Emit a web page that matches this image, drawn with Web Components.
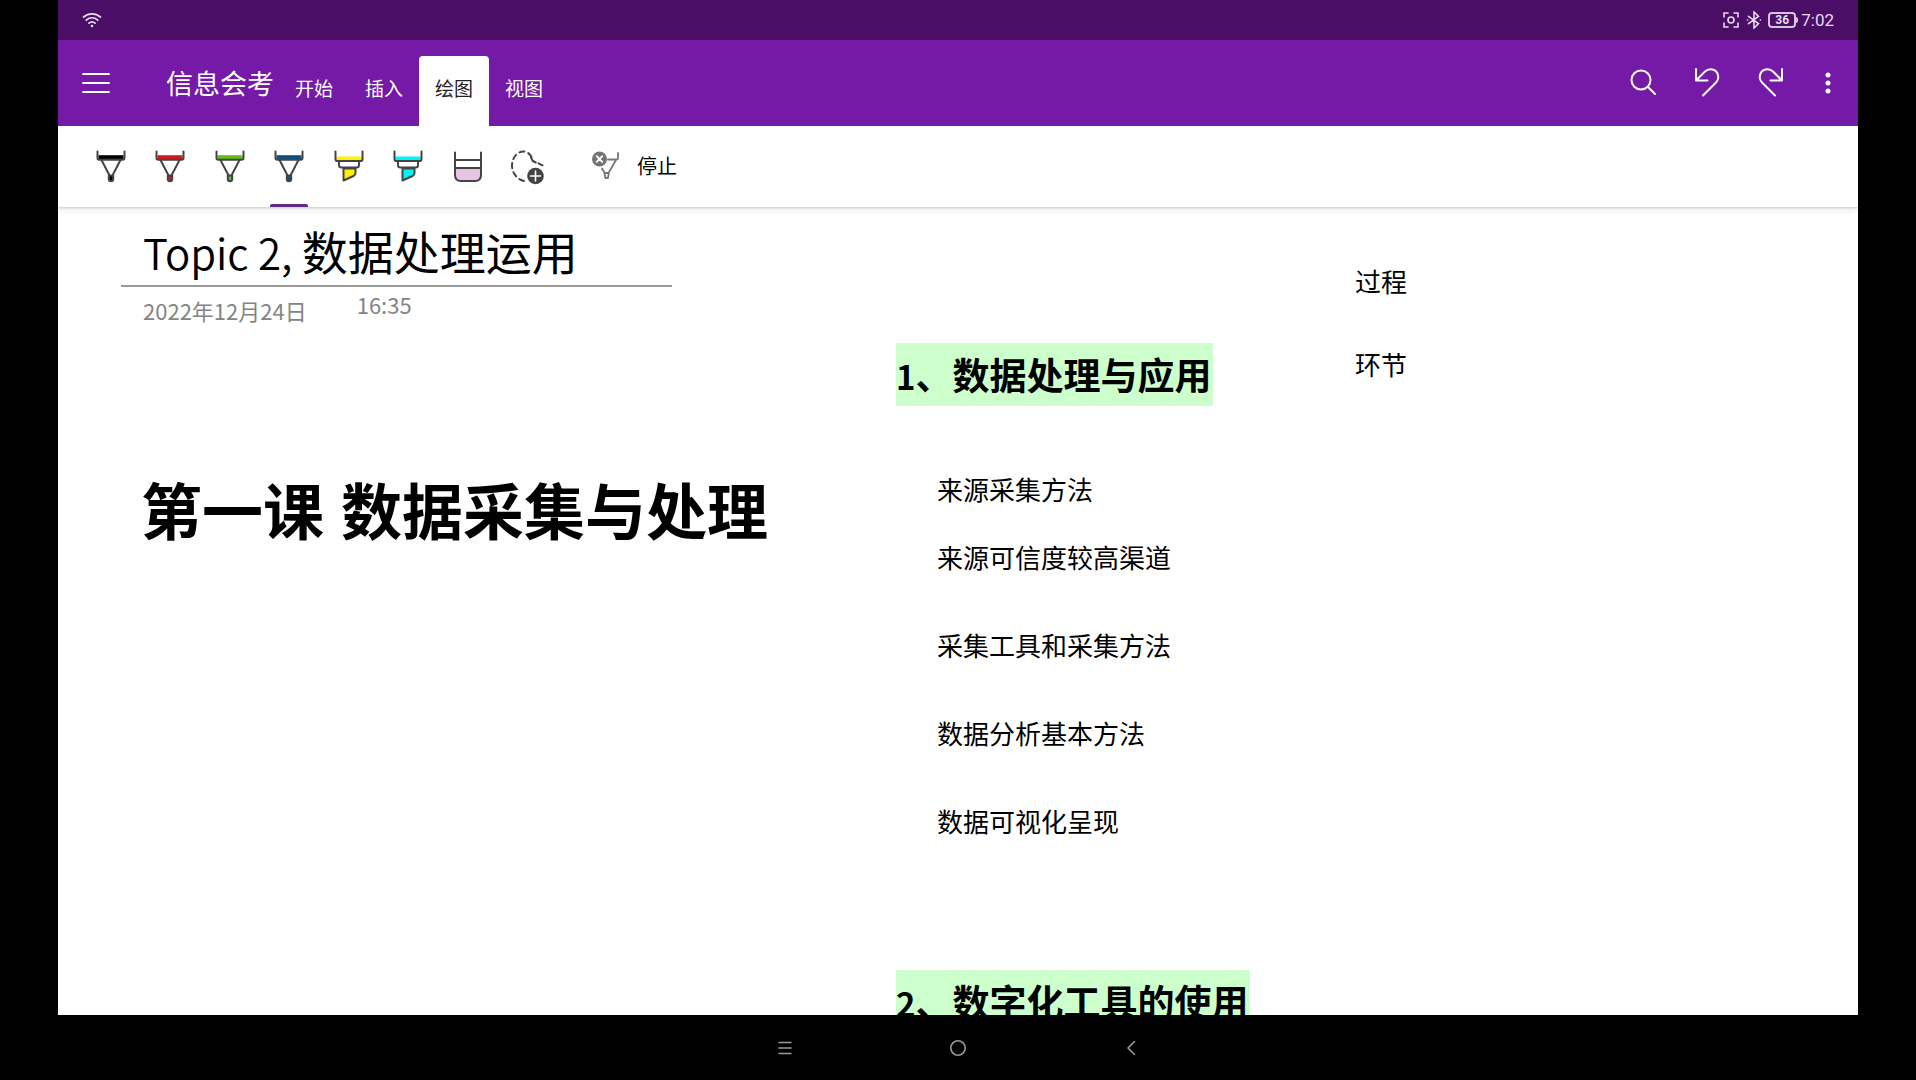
<!DOCTYPE html>
<html lang="zh-CN">
<head>
<meta charset="utf-8">
<title>信息会考</title>
<style>
  html, body { height: 100%; margin: 0; }
  body { background: #000; font-family: "Noto Sans CJK SC", sans-serif; color: #000; }
</style>
</head>
<body>
<notebook-app>
  <status-bar slot="status" battery="36" time="7:02"></status-bar>
  <app-header slot="header" heading="信息会考">
    <ribbon-tab>开始</ribbon-tab>
    <ribbon-tab>插入</ribbon-tab>
    <ribbon-tab active>绘图</ribbon-tab>
    <ribbon-tab>视图</ribbon-tab>
  </app-header>
  <draw-toolbar slot="toolbar">
    <draw-tool kind="pen" color="#000000" label="黑色笔"></draw-tool>
    <draw-tool kind="pen" color="#d9161c" label="红色笔"></draw-tool>
    <draw-tool kind="pen" color="#62bd19" label="绿色笔"></draw-tool>
    <draw-tool kind="pen" color="#0b4f82" label="蓝色笔" active></draw-tool>
    <draw-tool kind="marker" color="#fff200" label="黄色荧光笔"></draw-tool>
    <draw-tool kind="marker" color="#00f4f8" label="青色荧光笔"></draw-tool>
    <draw-tool kind="eraser" color="#e8c5e2" label="橡皮擦"></draw-tool>
    <draw-tool kind="lasso" label="套索选择"></draw-tool>
    <stop-button slot="end">停止</stop-button>
  </draw-toolbar>
  <note-page>
    <note-title slot="main" date="2022年12月24日" time="16:35">Topic 2, <b>数据处理运用</b></note-title>
    <lesson-heading slot="main">第一课 数据采集与处理</lesson-heading>
    <note-section slot="outline" number="1" heading="数据处理与应用">
      <p>来源采集方法</p>
      <p>来源可信度较高渠道</p>
      <p>采集工具和采集方法</p>
      <p>数据分析基本方法</p>
      <p>数据可视化呈现</p>
    </note-section>
    <note-section slot="outline" number="2" heading="数字化工具的使用"></note-section>
    <p slot="side">过程</p>
    <p slot="side">环节</p>
  </note-page>
  <system-nav slot="nav"></system-nav>
</notebook-app>

<script>
const define = (name, render) => customElements.define(name, class extends HTMLElement {
  connectedCallback() {
    if (this.shadowRoot) return;
    this.attachShadow({ mode: "open" }).innerHTML = render(this);
  }
});
const buttonReset = `button { appearance: none; border: 0; margin: 0; padding: 0; background: none; color: inherit; font: inherit; display: flex; align-items: center; justify-content: center; }
  svg { display: block; flex: none; fill: none; stroke-linecap: round; stroke-linejoin: round; }`;

define("notebook-app", () => `
  <style>
    :host { display: flex; flex-direction: column; height: 100vh; padding: 0 58px; box-sizing: border-box; }
    main { flex: 1; min-height: 0; background: #fff; overflow: hidden; display: flex; flex-direction: column; }
  </style>
  <slot name="status"></slot>
  <slot name="header"></slot>
  <slot name="toolbar"></slot>
  <main><slot></slot></main>
  <slot name="nav"></slot>`);

define("status-bar", el => `
  <style>
    :host { display: flex; align-items: center; justify-content: space-between; height: 40px; padding: 0 24px; background: #4b0e66; color: #e6d9ec; box-sizing: border-box; }
    .right { display: flex; align-items: center; gap: 6px; }
    .battery { display: flex; align-items: center; }
    .level { border: 2px solid #d5c3dd; border-radius: 4px; width: 24px; height: 12px; font: 700 12px/12px Roboto, sans-serif; text-align: center; }
    .cap { width: 2px; height: 6px; background: #d5c3dd; border-radius: 0 2px 2px 0; }
    time { font: 17px/20px Roboto, sans-serif; }
    .clock { display: flex; align-items: center; gap: 3px; }
    svg { display: block; fill: none; stroke: #e6d9ec; stroke-linecap: round; }
  </style>
  <svg width="20" height="16" viewBox="0 0 20 16" stroke-width="1.7"><path d="M1.5 5C6.5.7 13.5.7 18.5 5M4.2 8.200C7.700 5.200 12.300 5.200 15.800 8.200M6.900 11.200C8.800 9.600 11.200 9.600 13.100 11.200"/><circle cx="10" cy="14" r="1.300" fill="#e6d9ec" stroke="none"/></svg>
  <div class="right">
    <svg width="18" height="18" viewBox="0 0 18 18" stroke-width="1.6"><path d="M2 6V2h4M12 2h4v4M16 12v4h-4M6 16H2v-4"/><circle cx="9" cy="9" r="3"/></svg>
    <svg width="16" height="18" viewBox="0 0 16 18" stroke-width="1.6"><path d="M2.500 5.300l10 7.400L8 17V1l4.500 4.300-10 7.400M1.500 9h.2M14.300 9h.2"/></svg>
    <div class="clock"><div class="battery"><span class="level">${el.getAttribute("battery")}</span><i class="cap"></i></div>
    <time>${el.getAttribute("time")}</time></div>
  </div>`);

define("app-header", el => `
  <style>
    ${buttonReset}
    :host { display: flex; align-items: stretch; height: 86px; background: #741aa6; color: #fff; }
    .menu { width: 76px; }
    h1 { margin: 0 5px 0 32px; font-size: 27px; font-weight: 400; line-height: 86px; height: 86px; }
    nav { display: flex; align-items: flex-end; flex: 1; }
    .actions { display: flex; align-items: stretch; padding-right: 5px; }
    .actions button { width: 64px; padding-bottom: 2px; }
    .actions button:last-child { width: 50px; padding-bottom: 0; }
    svg { stroke: #fff; }
  </style>
  <button class="menu" aria-label="菜单"><svg width="28" height="22" viewBox="0 0 28 22" stroke-width="1.8"><path d="M1 2h26M1 11h26M1 20h26"/></svg></button>
  <h1>${el.getAttribute("heading")}</h1>
  <nav><slot></slot></nav>
  <div class="actions">
    <button aria-label="搜索"><svg width="28" height="28" viewBox="0 0 28 28" stroke-width="2"><circle cx="12" cy="12" r="9.500"/><path d="M19 19l7 7"/></svg></button>
    <button aria-label="撤消"><svg width="26" height="30" viewBox="0 0 26 30" stroke-width="2"><path d="M2 2v11.500h11.500M2.500 13L11 4.500C14 1.500 19 1.300 22 4.300C25.200 7.500 25 12.500 22 15.500L9 28.500"/></svg></button>
    <button aria-label="恢复"><svg width="26" height="30" viewBox="0 0 26 30" stroke-width="2"><path d="M24 2v11.500H12.500M23.500 13L15 4.500C12 1.500 7 1.300 4 4.300C.8 7.500 1 12.500 4 15.500L17 28.500"/></svg></button>
    <button aria-label="更多"><svg width="6" height="24" viewBox="0 0 6 24"><g fill="#fff" stroke="none"><circle cx="3" cy="4" r="2.500"/><circle cx="3" cy="12" r="2.500"/><circle cx="3" cy="20" r="2.500"/></g></svg></button>
  </div>`);

define("ribbon-tab", () => `
  <style>
    ${buttonReset}
    :host { display: block; color: #fff; }
    :host([active]) { background: #fff; color: #222; border-radius: 4px 4px 0 0; }
    button { width: 70px; height: 70px; padding-bottom: 8px; font-size: 19px; }
  </style>
  <button><slot></slot></button>`);

define("draw-toolbar", () => `
  <style>
    :host { display: flex; height: 81px; flex: none; background: #fff; padding-left: 23px; position: relative; z-index: 1; box-shadow: 0 1px 2px #ccc, 0 2px 8px #e4e4e4; clip-path: inset(0 0 -12px 0); }
    .tools { display: flex; width: 476px; }
  </style>
  <div class="tools"><slot></slot></div>
  <slot name="end"></slot>`);

const toolShapes = {
  pen: c => `<path d="M2.500 5.200h25v4.300h-25z" fill="${c}" stroke="none"/><path d="M1.500 1.500V8q0 1.800 1.800 1.800h23.400q1.800 0 1.800-1.800V1.500"/><path d="M5.500 10l7.800 15M24.500 10l-7.800 15"/><path d="M12.800 25.500h4.400v3.500q0 2.200-2.200 2.200t-2.200-2.200z" fill="${c}"/>`,
  marker: c => `<path d="M2.500 6.500h25v4h-25z" fill="${c}" stroke="none"/><path d="M1.500 1.500v7.700q0 1.800 1.800 1.800h23.400q1.800 0 1.800-1.800V1.500"/><path d="M5 11.500v3.500q0 2.500 2.500 2.500h15q2.500 0 2.500-2.500v-3.500"/><path d="M9.500 18.500v12l10-4.500q2-1 2-3v-4.500z" fill="${c}"/>`,
  eraser: c => `<path d="M2 18.500h26V25q0 6-6 6H8q-6 0-6-6z" fill="${c}" stroke="none"/><path d="M2 2.500v22.500q0 6 6 6h14q6 0 6-6V2.500M2 10h26M2 18h26"/>`,
  lasso: () => `<path d="M19.500 7C17.500 3.500 14.500 1.500 11.500 1.500C5.500 1.500.0 7.500.0 15.500C.0 24 6.500 31 15 31.500" stroke-dasharray="5 4.200"/><path d="M19 7.500l1.800 3.500 3 1.500M26.500 13.300l4 2"/><circle cx="23.500" cy="26" r="8.300" fill="#444" stroke="none"/><path d="M23.500 21v10M18.500 26h10" stroke="#fff" stroke-width="1.600"/>`
};
define("draw-tool", el => `
  <style>
    ${buttonReset}
    :host { display: flex; flex: 1; }
    button { flex: 1; padding-bottom: 2px; position: relative; }
    svg { stroke: #444; stroke-width: 2; overflow: visible; }
    :host([active]) button::after { content: ""; position: absolute; left: 50%; bottom: 0; width: 38px; height: 3px; margin-left: -19px; background: #5e2b80; border-radius: 2px 2px 0 0; }
  </style>
  <button aria-label="${el.getAttribute("label")}"><svg width="30" height="32" viewBox="0 0 30 32">${toolShapes[el.getAttribute("kind")](el.getAttribute("color"))}</svg></button>`);

define("stop-button", () => `
  <style>
    ${buttonReset}
    :host { display: flex; margin-left: 34px; }
    button { gap: 16px; font-size: 20px; padding-bottom: 3px; }
    svg { stroke: #777; stroke-width: 1.800; }
  </style>
  <button><svg width="30" height="30" viewBox="0 0 30 30"><path d="M27 3v5q0 1.500-1.500 1.500H17M25 10l-7.500 13M11 18.500l3 5M13.500 23h4.300l-.8 5h-2.700z"/><circle cx="8.500" cy="9" r="7.500" fill="#737373" stroke="none"/><path d="M5.700 6.200l5.600 5.600M11.300 6.200l-5.600 5.600" stroke="#fff"/></svg><slot></slot></button>`);

define("note-page", () => `
  <style>
    :host { display: grid; grid-template-columns: 775fr 459fr 503fr; padding-left: 63px; }
    .outline { padding-top: 136px; }
    .side { padding-top: 54px; }
    .side ::slotted(p) { margin: 0 0 43px; font-size: 26px; line-height: 40px; }
  </style>
  <div><slot name="main"></slot></div>
  <div class="outline"><slot name="outline"></slot></div>
  <div class="side"><slot name="side"></slot></div>`);

define("note-title", el => `
  <style>
    :host { display: block; width: 551px; }
    h2 { margin: 0; padding: 10px 0 2px 22px; font-size: 42px; line-height: 66px; font-weight: 350; border-bottom: 2px solid #999; white-space: pre; height: 66px; }
    h2 ::slotted(b) { font-weight: 400; font-size: 46px; }
    .stamp { display: flex; align-items: flex-start; gap: 50px; height: 36px; padding-left: 22px; color: #848484; font-size: 22px; line-height: 34px; }
    .date { padding-top: 6px; }
  </style>
  <h2><slot></slot></h2>
  <div class="stamp"><span class="date">${el.getAttribute("date")}</span><time>${el.getAttribute("time")}</time></div>`);

define("lesson-heading", () => `
  <style>
    :host { display: block; padding: 146px 0 0 20px; }
    h3 { margin: 0; font: 700 61px/90px "Liberation Sans", "Noto Sans CJK SC", sans-serif; white-space: nowrap; }
  </style>
  <h3><slot></slot></h3>`);

define("note-section", el => `
  <style>
    :host { display: block; }
    h3 { margin: 0; padding-right: 2px; display: inline-block; vertical-align: top; background: #cfc; font-size: 37px; line-height: 63px; height: 63px; white-space: nowrap; }
    .number { font-size: 33px; }
    .items { padding: 63px 0 109px 41px; }
    ::slotted(p) { margin: 0 0 48px; font-size: 26px; line-height: 40px; }
    ::slotted(p:first-child) { margin-bottom: 28px; }
    ::slotted(p:last-child) { margin-bottom: 20px; }
  </style>
  <h3><span class="number">${el.getAttribute("number")}</span>、${el.getAttribute("heading")}</h3>
  <div class="items"><slot></slot></div>`);

define("system-nav", () => `
  <style>
    ${buttonReset}
    :host { display: flex; justify-content: center; height: 65px; flex: none; background: #000; }
    button { width: 173px; }
    svg { stroke: #999; stroke-width: 1.600; }
  </style>
  <button aria-label="最近任务"><svg width="16" height="16" viewBox="0 0 16 16"><path d="M2 2.500h12M2 8h12M2 13.500h12"/></svg></button>
  <button aria-label="主页"><svg width="18" height="18" viewBox="0 0 18 18"><circle cx="9" cy="9" r="7.200"/></svg></button>
  <button aria-label="返回"><svg width="16" height="16" viewBox="0 0 16 16"><path d="M11.500 1.500L5 8l6.500 6.500"/></svg></button>`);
</script>
</body>
</html>
